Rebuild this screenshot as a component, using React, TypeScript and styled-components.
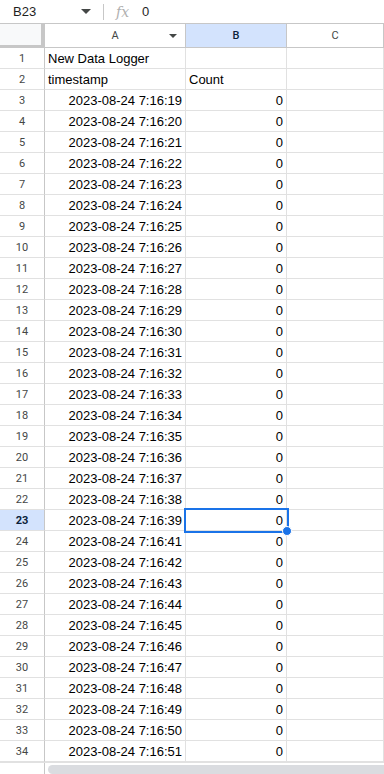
import styled, { createGlobalStyle } from "styled-components";

const GlobalStyle = createGlobalStyle`
  html, body {
    margin: 0;
    padding: 0;
    background: #ffffff;
    overflow: hidden;
  }
  body {
    font-family: "Liberation Sans", Arial, sans-serif;
  }
`;

const Sheet = styled.div`
  width: 384px;
  height: 774px;
  display: flex;
  flex-direction: column;
  overflow: hidden;
  background: #fff;
`;

const FormulaBar = styled.div`
  height: 24px;
  display: flex;
  align-items: center;
  border-bottom: 1px solid #c7c7c7;
  box-sizing: border-box;
  font-size: 13px;
  color: #1f1f1f;
`;

const NameBox = styled.div`
  width: 104px;
  display: flex;
  align-items: center;
  justify-content: space-between;
  padding: 0 12px 0 13px;
  box-sizing: border-box;
  border-right: 1px solid #c7c7c7;
  height: 16px;
`;

const Caret = styled.span`
  width: 0;
  height: 0;
  border-left: 5px solid transparent;
  border-right: 5px solid transparent;
  border-top: 5px solid #444746;
`;

const Fx = styled.span`
  font-family: "DejaVu Serif", serif;
  font-style: italic;
  font-size: 14px;
  color: #b0b0b0;
  margin-left: 12px;
  width: 26px;
`;

const HeaderRow = styled.div`
  height: 24px;
  display: grid;
  grid-template-columns: 45px 141px 101px 1fr;
  border-bottom: 1px solid #c7c7c7;
  box-sizing: border-box;
`;

const Corner = styled.div`
  background: #f8f9fa;
  border-right: 4px solid #c7c7c7;
  border-bottom: 3px solid #c7c7c7;
  box-sizing: border-box;
  margin-bottom: -1px;
`;

const ColHeader = styled.div<{ $active?: boolean }>`
  position: relative;
  display: flex;
  align-items: center;
  justify-content: center;
  font-family: Roboto, "Liberation Sans", sans-serif;
  font-size: 11px;
  color: ${({ $active }) => ($active ? "#0b1f3a" : "#444746")};
  font-weight: ${({ $active }) => ($active ? 500 : 400)};
  background: ${({ $active }) => ($active ? "#d3e3fd" : "#fff")};
  border-right: 1px solid #c7c7c7;
  box-sizing: border-box;
`;

const ColCaret = styled.span`
  position: absolute;
  right: 8px;
  top: 10px;
  width: 0;
  height: 0;
  border-left: 4px solid transparent;
  border-right: 4px solid transparent;
  border-top: 4px solid #444746;
`;

const Body = styled.div`
  flex: 1;
  display: flex;
  flex-direction: column;
`;

const Row = styled.div`
  height: 21px;
  display: grid;
  grid-template-columns: 45px 141px 101px 1fr;
  flex-shrink: 0;
`;

const RowNum = styled.div<{ $active?: boolean }>`
  display: flex;
  align-items: center;
  justify-content: center;
  padding-top: 1px;
  font-family: Roboto, "Liberation Sans", sans-serif;
  font-size: 11px;
  color: ${({ $active }) => ($active ? "#0b1f3a" : "#444746")};
  font-weight: ${({ $active }) => ($active ? 700 : 400)};
  background: ${({ $active }) => ($active ? "#d3e3fd" : "#fff")};
  border-right: 1px solid #c7c7c7;
  border-bottom: 1px solid #e1e1e1;
  box-sizing: border-box;
`;

const Cell = styled.div<{ $align?: "left" | "right"; $selected?: boolean }>`
  position: relative;
  display: flex;
  align-items: center;
  justify-content: ${({ $align }) => ($align === "right" ? "flex-end" : "flex-start")};
  padding: 1px 3px 0;
  font-size: 13px;
  color: #000;
  white-space: nowrap;
  border-right: 1px solid #e1e1e1;
  border-bottom: 1px solid #e1e1e1;
  box-sizing: border-box;
  box-shadow: ${({ $selected }) => ($selected ? "0 0 0 2px #1a73e8" : "none")};
  z-index: ${({ $selected }) => ($selected ? 1 : 0)};
`;

const Handle = styled.span`
  position: absolute;
  right: -6px;
  bottom: -6px;
  width: 8px;
  height: 8px;
  border-radius: 50%;
  background: #1a73e8;
  border: 1px solid #fff;
`;

const ScrollTrack = styled.div`
  height: 11px;
  margin-top: auto;
  display: grid;
  grid-template-columns: 45px 1fr;
  background: #fff;
  border-top: 1px solid #e1e1e1;
`;

const ScrollGutter = styled.div`
  border-right: 1px solid #c7c7c7;
`;

const ScrollThumb = styled.div`
  margin: 2px 0 0 3px;
  background: #dadce0;
  border-radius: 5px 0 0 5px;
`;

const rows: { n: number; a: string; b: string; aAlign: "left" | "right"; bAlign: "left" | "right" }[] = [
  { n: 1, a: "New Data Logger", b: "", aAlign: "left", bAlign: "left" },
  { n: 2, a: "timestamp", b: "Count", aAlign: "left", bAlign: "left" },
];

const seconds = [19, 20, 21, 22, 23, 24, 25, 26, 27, 28, 29, 30, 31, 32, 33, 34, 35, 36, 37, 38, 39, 41, 42, 43, 44, 45, 46, 47, 48, 49, 50, 51];
seconds.forEach((s, i) => {
  rows.push({ n: i + 3, a: `2023-08-24 7:16:${s}`, b: "0", aAlign: "right", bAlign: "right" });
});

const App = () => {
  return (
    <Sheet>
      <GlobalStyle />
      <FormulaBar>
        <NameBox>
          <span>B23</span>
          <Caret />
        </NameBox>
        <Fx>fx</Fx>
        <span>0</span>
      </FormulaBar>
      <HeaderRow>
        <Corner />
        <ColHeader>
          A
          <ColCaret />
        </ColHeader>
        <ColHeader $active>B</ColHeader>
        <ColHeader>C</ColHeader>
      </HeaderRow>
      <Body>
        {rows.map((r) => (
          <Row key={r.n}>
            <RowNum $active={r.n === 23}>{r.n}</RowNum>
            <Cell $align={r.aAlign}>{r.a}</Cell>
            <Cell $align={r.bAlign} $selected={r.n === 23}>
              {r.b}
              {r.n === 23 && <Handle />}
            </Cell>
            <Cell />
          </Row>
        ))}
        <ScrollTrack>
          <ScrollGutter />
          <ScrollThumb />
        </ScrollTrack>
      </Body>
    </Sheet>
  );
};

export default App;
